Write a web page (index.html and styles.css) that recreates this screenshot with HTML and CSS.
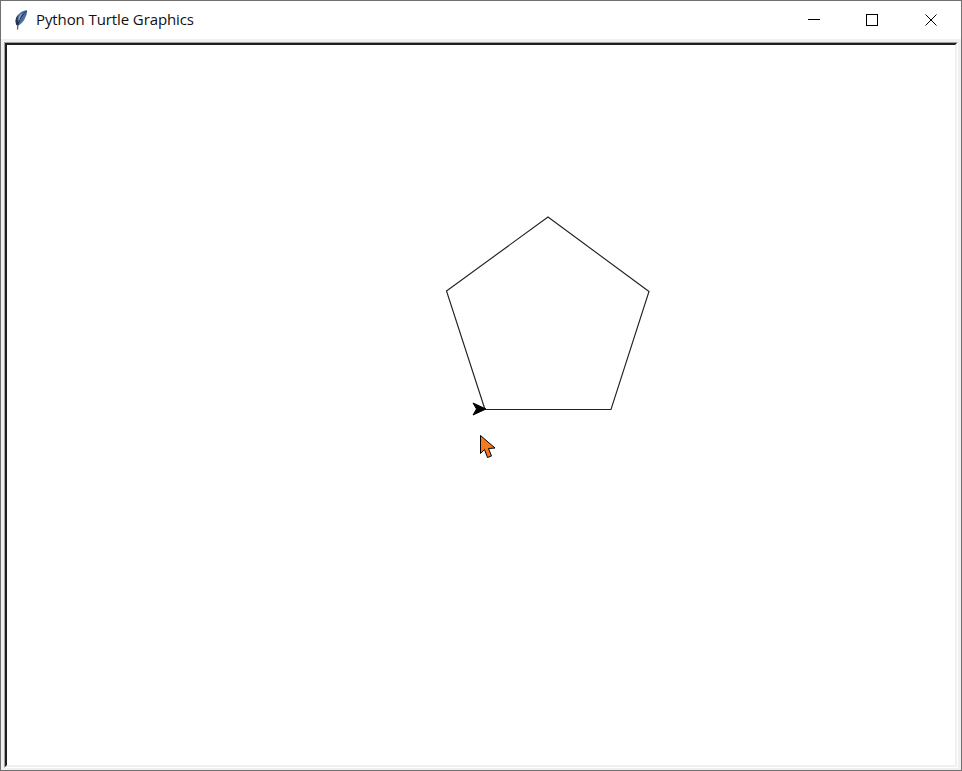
FILE: index.html
```html
<!DOCTYPE html>
<html lang="en">
<head>
<meta charset="utf-8">
<title>Python Turtle Graphics</title>
<link rel="stylesheet" href="styles.css">
</head>
<body>
<div class="window">
  <header class="titlebar">
    <svg class="feather" width="13" height="20" viewBox="0 0 13 20" aria-hidden="true">
      <path d="M2.500 19.500 L3 13" stroke="#5c5f66" stroke-width="1.300" fill="none"/>
      <path d="M1.500 15 C-0.500 11 1 6 5 3 C7.500 1 10.500 0 12 0.500 C12.500 2 11.500 5 10.500 7 C9.500 10 7.500 12.500 5.500 14 C4 15.500 2.500 16 1.500 15 Z" fill="#4d6f9f"/>
      <path d="M1.500 15 C-0.500 11 1 7 3 5 C2.500 8 2.500 11 3.500 14.500 C3 15.500 2 15.500 1.500 15 Z" fill="#26344f"/>
      <path d="M3 14.500 C4 10 7 5 11.500 1" stroke="#1f2c46" stroke-width="1" fill="none"/>
      <path d="M6.500 4 C5 6 4.200 8 4 10" stroke="#a9bfdd" stroke-width="1" fill="none"/>
    </svg>
    <span class="title">Python Turtle Graphics</span>
    <div class="controls">
      <span class="control">
        <svg width="12" height="12" viewBox="0 0 12 12"><path d="M0 5.500H12" stroke="#000" fill="none"/></svg>
      </span>
      <span class="control">
        <svg width="12" height="12" viewBox="0 0 12 12"><rect x="0.500" y="0.500" width="11" height="11" stroke="#000" fill="none"/></svg>
      </span>
      <span class="control">
        <svg width="12" height="12" viewBox="0 0 12 12"><path d="M0.500 0.500L11.500 11.500M11.500 0.500L0.500 11.500" stroke="#000" fill="none"/></svg>
      </span>
    </div>
  </header>
  <main class="frame">
    <div class="well">
      <div class="canvas">
        <svg class="drawing" viewBox="7 45 948 720" preserveAspectRatio="xMinYMin" aria-hidden="true">
          <path class="pentagon" d="M485 409.500H611L649 291.500L548 217L446.500 291L485 409.500"/>
          <path d="M486 409L473 403L476.500 409L473 415Z" fill="#000" stroke="#000" stroke-width="1"/>
          <path d="M480.500 435.500V453.500L484.500 449.500L487.500 457.500L491.500 456L488.500 448.500L495 448Z" fill="#f47a22" stroke="#000" stroke-width="1"/>
        </svg>
      </div>
    </div>
  </main>
</div>
</body>
</html>
```
FILE: styles.css
```css
html, body {
  margin: 0;
  padding: 0;
  height: 100%;
  overflow: hidden;
}
.window {
  box-sizing: border-box;
  width: 962px;
  height: 771px;
  border: 1px solid #707070;
  display: flex;
  flex-direction: column;
  background: #f0f0f0;
}
.titlebar {
  height: 38px;
  flex: none;
  background: #fff;
  display: flex;
  align-items: center;
  padding-left: 14px;
  padding-right: 1px;
  font-family: "Open Sans", "Noto Sans", sans-serif;
  font-size: 15px;
  letter-spacing: -0.1px;
  color: #111;
}
.feather { flex: none; margin-bottom: 1px; }
.title { margin-left: 8px; padding-bottom: 2px; }
.controls {
  margin-left: auto;
  display: flex;
}
.control {
  width: 58.500px;
  height: 38px;
  display: flex;
  align-items: center;
  justify-content: center;
}
.control svg { display: block; }
.frame {
  flex: 1;
  min-height: 0;
  display: flex;
  padding: 3px 3px 2px 3px;
  background: #f0f0f0;
}
.well {
  flex: 1;
  min-width: 0;
  display: flex;
  border-style: solid;
  border-width: 1px;
  border-color: #a0a0a0 #fff #fff #a0a0a0;
}
.canvas {
  flex: 1;
  min-width: 0;
  background: #fff;
  border-style: solid;
  border-width: 2px;
  border-color: #1e1e1e #f0f0f0 #f0f0f0 #1e1e1e;
  display: flex;
}
.drawing {
  display: block;
  width: 100%;
  height: 100%;
}
.pentagon {
  fill: none;
  stroke: #222;
  stroke-width: 1.150;
}
```
